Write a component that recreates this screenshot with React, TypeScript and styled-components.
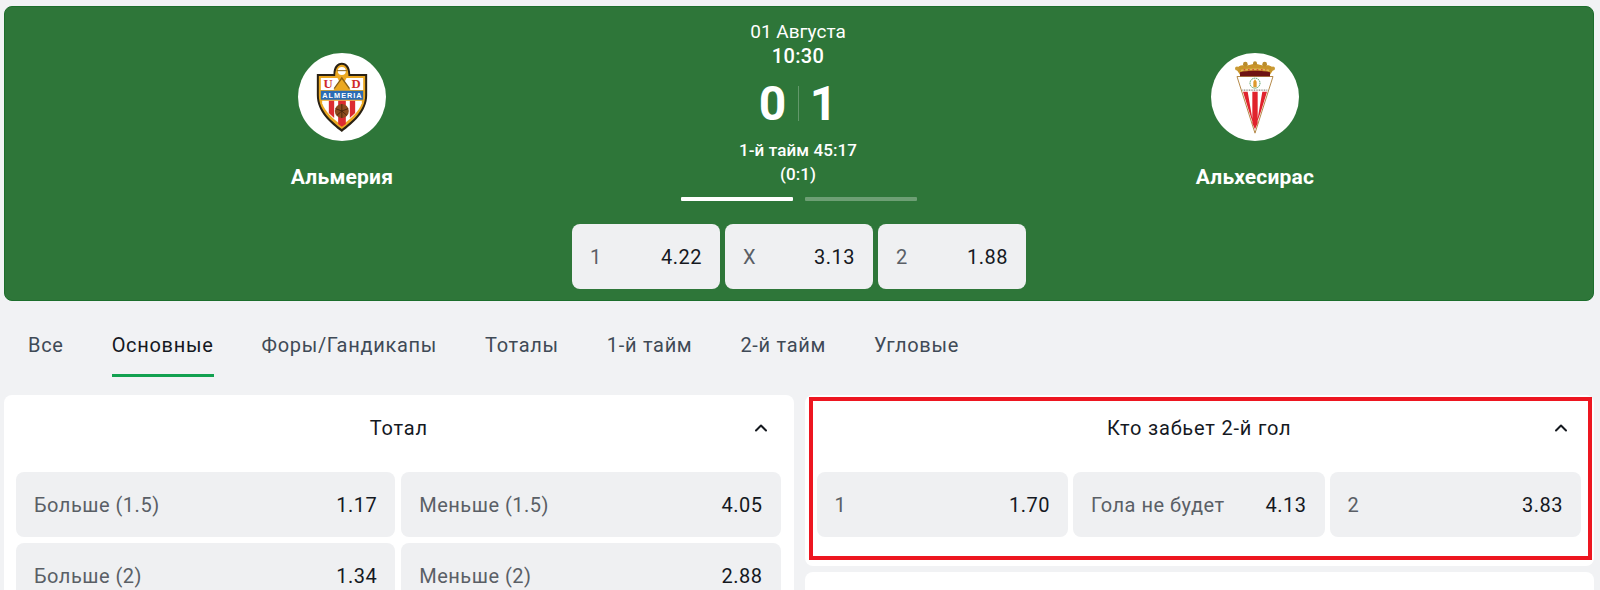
import React from 'react';
import styled, { createGlobalStyle } from 'styled-components';
import { ChevronUp } from 'lucide-react';

const GlobalStyle = createGlobalStyle`
  html, body {
    margin: 0;
    height: 590px;
    overflow: hidden;
    background: #f1f2f4;
    font-family: Roboto, "Noto Sans", sans-serif;
  }
  * {
    box-sizing: border-box;
  }
`;

const Page = styled.div`
  height: 590px;
  overflow: hidden;
  padding: 6px 6px 0 4px;
`;

const Banner = styled.section`
  height: 295px;
  padding-top: 13px;
  background: #2e7639;
  border: 1px solid #1c6e2c;
  border-radius: 8px;
  color: #fff;
`;

const MatchGrid = styled.div`
  display: grid;
  grid-template-columns: 674px 238px 1fr;
`;

const Team = styled.div`
  display: flex;
  flex-direction: column;
  align-items: center;
  padding-top: 33px;
`;

const Logo = styled.div`
  width: 88px;
  height: 88px;
  border-radius: 50%;
  background: #fff;
  display: flex;
  align-items: center;
  justify-content: center;
`;

const TeamName = styled.div`
  margin-top: 24px;
  font-size: 21px;
  line-height: 24px;
  font-weight: 700;
  letter-spacing: 0.2px;
`;

const Center = styled.div`
  display: flex;
  flex-direction: column;
  align-items: center;
`;

const DateText = styled.div`
  font-size: 19px;
  line-height: 24px;
`;

const TimeText = styled.div`
  margin-top: 1px;
  font-size: 20px;
  line-height: 23px;
  font-weight: 500;
  letter-spacing: 0.4px;
`;

const Score = styled.div`
  margin-top: 12px;
  display: flex;
  align-items: center;
  height: 46px;
  font-size: 48px;
  font-weight: 700;
`;

const ScoreDigit = styled.span`
  width: 50px;
  text-align: center;
`;

const ScoreDivider = styled.span`
  width: 1px;
  height: 35px;
  background: rgba(255, 255, 255, 0.25);
`;

const Period = styled.div`
  margin-top: 12px;
  font-size: 17px;
  line-height: 24px;
  font-weight: 500;
  letter-spacing: 0.1px;
  text-align: center;
`;

const Progress = styled.div`
  margin: 11px 0 0 2px;
  width: 236px;
  display: grid;
  grid-template-columns: 112px 112px;
  justify-content: space-between;
`;

const ProgressBar = styled.div<{ $active?: boolean }>`
  height: 4px;
  border-radius: 1px;
  background: ${(p) => (p.$active ? '#fff' : 'rgba(255, 255, 255, 0.3)')};
`;

const BannerOdds = styled.div`
  margin-top: 23px;
  display: grid;
  grid-template-columns: repeat(3, 148px);
  gap: 5px;
  justify-content: center;
`;

const OddButton = styled.button`
  height: 65px;
  padding: 0 18px;
  display: flex;
  align-items: center;
  justify-content: space-between;
  border: 0;
  border-radius: 8px;
  background: #eff0f2;
  font-family: inherit;
  font-size: 20px;
  letter-spacing: 0.5px;
`;

const OddLabel = styled.span`
  color: #5a5f66;
`;

const OddValue = styled.span`
  color: #15191f;
`;

const Tabs = styled.nav`
  height: 94px;
  padding: 29px 0 0 24px;
  display: flex;
  gap: 48px;
`;

const Tab = styled.div<{ $active?: boolean }>`
  height: 47px;
  padding-top: 3px;
  font-size: 20px;
  line-height: 24px;
  letter-spacing: 0.7px;
  color: ${(p) => (p.$active ? '#15191f' : '#3f4a56')};
  border-bottom: 3px solid ${(p) => (p.$active ? '#12a150' : 'transparent')};
`;

const Markets = styled.div`
  display: grid;
  grid-template-columns: 1fr 1fr;
  gap: 11px;
  align-items: start;
`;

const Column = styled.div`
  display: flex;
  flex-direction: column;
  gap: 6px;
`;

const Card = styled.section`
  position: relative;
  padding: 0 13px 29px 12px;
  background: #fff;
  border-radius: 8px;
`;

const CardHeader = styled.header`
  height: 77px;
  margin: 0 -13px 0 -12px;
  padding: 0 23px 12px;
  display: grid;
  grid-template-columns: 1fr auto 1fr;
  align-items: center;
  font-size: 20px;
  letter-spacing: 0.8px;
  color: #15191f;
`;

const Title = styled.h3`
  grid-column: 2;
  margin: 0;
  font: inherit;
`;

const Chevron = styled(ChevronUp)`
  grid-column: 3;
  justify-self: end;
`;

const OddGrid = styled.div<{ $cols: number; $gap: number }>`
  display: grid;
  grid-template-columns: repeat(${(p) => p.$cols}, 1fr);
  gap: 6px ${(p) => p.$gap}px;
`;

const Highlight = styled.div`
  position: absolute;
  top: 2px;
  left: 4px;
  right: 2px;
  bottom: 6px;
  border: 4px solid #ed1620;
  pointer-events: none;
`;

const EmptyCard = styled(Card)`
  height: 120px;
`;

const AlmeriaCrest = () => (
  <svg width="52" height="70" viewBox="0 0 155 210">
    <path d="M2 36H52C52 14 62 2 77 2s25 12 25 34h51V100C153 150 110 185 77 210 44 185 2 150 2 100Z" fill="#2a2114" />
    <path d="M8 42H57C57 20 65 8 77 8s20 12 20 34h50V100C147 146 108 178 77 201 46 178 8 146 8 100Z" fill="#eba821" />
    <circle cx="77" cy="27" r="12" fill="#fff" />
    <path d="M62 26H92" stroke="#8a5f12" strokeWidth="3" />
    <path d="M14 48H64L70 60 52 84H14Z" fill="#fff" />
    <path d="M141 48H91L85 60 103 84H141Z" fill="#fff" />
    <path d="M54 80 77 48 100 80" fill="none" stroke="#8a5f12" strokeWidth="4" />
    <text x="36" y="78" textAnchor="middle" fontFamily="Liberation Serif" fontWeight="700" fontSize="38" fill="#d02a2a">U</text>
    <text x="120" y="78" textAnchor="middle" fontFamily="Liberation Serif" fontWeight="700" fontSize="38" fill="#d02a2a">D</text>
    <path d="M14 86H141V113H14Z" fill="#2a6cb4" />
    <text x="77.5" y="107" textAnchor="middle" fontFamily="Liberation Sans" fontWeight="700" fontSize="22" fill="#fff" textLength="118">ALMERIA</text>
    <path d="M18 116H137V124C128 150 102 172 77 190 52 172 27 150 18 124Z" fill="#fff" />
    <path d="M38 116H54V168L38 153ZM66 116H89V186L77 194 66 186ZM101 116H117V153L101 168Z" fill="#dc2b30" />
    <circle cx="77" cy="147" r="21" fill="#8c4a1e" />
    <path d="M58 140 77 147 96 140M77 147V168M62 160 77 147 92 160M77 126V147" fill="none" stroke="#43210b" strokeWidth="2.5" />
  </svg>
);

const AlgecirasCrest = () => (
  <svg width="40" height="73" viewBox="0 0 120 218">
    <path d="M6 46H114L60 216Z" fill="#fff" stroke="#b58a4a" strokeWidth="3" />
    <path d="M24 92H38L54 184 60 204 42 150ZM52 92H68V186L60 204 52 186ZM82 92H96L78 150 66 184Z" fill="#e0232c" />
    <path d="M22 87H98" stroke="#8c8c80" strokeWidth="4" strokeDasharray="3 2" />
    <circle cx="60" cy="66" r="15" fill="none" stroke="#4a9a5a" strokeWidth="3" strokeDasharray="4 2" />
    <path d="M55 78V62L60 54 65 62V78Z" fill="#dd9a2c" />
    <path d="M4 24C10 14 20 10 32 14L46 11 60 7 74 11 88 14C100 10 110 14 116 24L104 42H16Z" fill="#c9942a" />
    <path d="M15 33C34 27 86 27 105 33V45H15Z" fill="#6e1313" />
    <path d="M18 28C36 23 84 23 102 28" fill="none" stroke="#e0bb55" strokeWidth="5" />
    <path d="M26 26H94" stroke="#c8232c" strokeWidth="3" strokeDasharray="5 8" />
    <circle cx="6" cy="22" r="6" fill="#c99a35" />
    <circle cx="31" cy="9" r="7" fill="#b98c2c" />
    <circle cx="60" cy="6" r="6" fill="#b98c2c" />
    <circle cx="89" cy="9" r="7" fill="#b98c2c" />
    <circle cx="114" cy="22" r="6" fill="#c99a35" />
  </svg>
);

const tabs = ['Все', 'Основные', 'Форы/Гандикапы', 'Тоталы', '1-й тайм', '2-й тайм', 'Угловые'];

const bannerOdds = [
  { label: '1', value: '4.22' },
  { label: 'X', value: '3.13' },
  { label: '2', value: '1.88' },
];

const totals = [
  { label: 'Больше (1.5)', value: '1.17' },
  { label: 'Меньше (1.5)', value: '4.05' },
  { label: 'Больше (2)', value: '1.34' },
  { label: 'Меньше (2)', value: '2.88' },
];

const secondGoal = [
  { label: '1', value: '1.70' },
  { label: 'Гола не будет', value: '4.13' },
  { label: '2', value: '3.83' },
];

const Odd = ({ label, value }: { label: string; value: string }) => (
  <OddButton>
    <OddLabel>{label}</OddLabel>
    <OddValue>{value}</OddValue>
  </OddButton>
);

const App: React.FC = () => {
  return (
    <Page>
      <GlobalStyle />
      <Banner>
        <MatchGrid>
          <Team>
            <Logo>
              <AlmeriaCrest />
            </Logo>
            <TeamName>Альмерия</TeamName>
          </Team>
          <Center>
            <DateText>01 Августа</DateText>
            <TimeText>10:30</TimeText>
            <Score>
              <ScoreDigit>0</ScoreDigit>
              <ScoreDivider />
              <ScoreDigit>1</ScoreDigit>
            </Score>
            <Period>
              1-й тайм 45:17
              <br />
              (0:1)
            </Period>
            <Progress>
              <ProgressBar $active />
              <ProgressBar />
            </Progress>
          </Center>
          <Team>
            <Logo>
              <AlgecirasCrest />
            </Logo>
            <TeamName>Альхесирас</TeamName>
          </Team>
        </MatchGrid>
        <BannerOdds>
          {bannerOdds.map((o) => (
            <Odd key={o.label} label={o.label} value={o.value} />
          ))}
        </BannerOdds>
      </Banner>

      <Tabs>
        {tabs.map((t) => (
          <Tab key={t} $active={t === 'Основные'}>
            {t}
          </Tab>
        ))}
      </Tabs>

      <Markets>
        <Column>
          <Card>
            <CardHeader>
              <Title>Тотал</Title>
              <Chevron size={20} strokeWidth={2.4} />
            </CardHeader>
            <OddGrid $cols={2} $gap={6}>
              {totals.map((o) => (
                <Odd key={o.label} label={o.label} value={o.value} />
              ))}
            </OddGrid>
          </Card>
        </Column>
        <Column>
          <Card>
            <CardHeader>
              <Title>Кто забьет 2-й гол</Title>
              <Chevron size={20} strokeWidth={2.4} />
            </CardHeader>
            <OddGrid $cols={3} $gap={5}>
              {secondGoal.map((o) => (
                <Odd key={o.label} label={o.label} value={o.value} />
              ))}
            </OddGrid>
            <Highlight />
          </Card>
          <EmptyCard />
        </Column>
      </Markets>
    </Page>
  );
};

export default App;
